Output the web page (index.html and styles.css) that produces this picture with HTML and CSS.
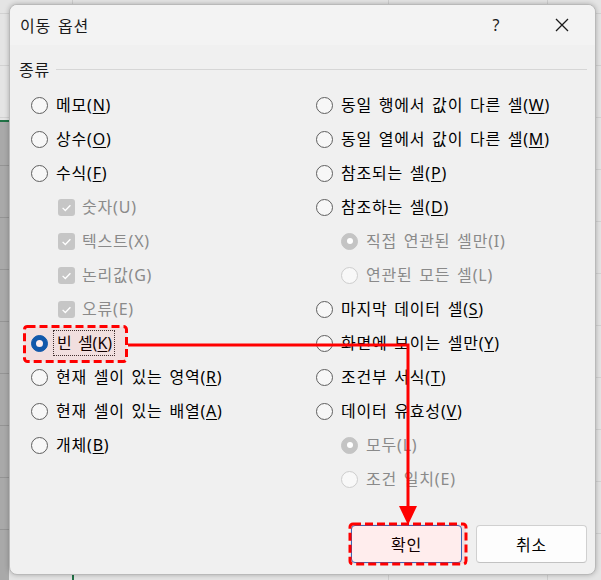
FILE: index.html
```html
<!DOCTYPE html>
<html lang="ko">
<head>
<meta charset="utf-8">
<title>이동 옵션</title>
<link rel="stylesheet" href="styles.css">
</head>
<body>
<div class="dialog">
  <div class="titlebar">
    <div class="title">이동 옵션</div>
    <div class="tb-btn help">?</div>
    <div class="tb-btn close">
      <svg width="14" height="14" viewBox="0 0 14 14"><path d="M1 1L13 13M13 1L1 13" stroke="#1a1a1a" stroke-width="1.3" fill="none"/></svg>
    </div>
  </div>
  <div class="content">
    <div class="group-head"><span class="group-label">종류</span><span class="group-line"></span></div>
    <div class="options">
      <div class="col">
        <div class="row"><span class="radio"></span><span class="lbl">메모(<u>N</u>)</span></div>
        <div class="row"><span class="radio"></span><span class="lbl">상수(<u>O</u>)</span></div>
        <div class="row"><span class="radio"></span><span class="lbl">수식(<u>F</u>)</span></div>
        <div class="row sub cbrow"><svg class="cb" width="17" height="17" viewBox="0 0 17 17"><rect x="0" y="0" width="17" height="17" rx="3" fill="#c6c6c6"/><path d="M4.6 8.9L7.3 11.5L12.4 6.2" stroke="#fff" stroke-width="1.3" fill="none"/></svg><span class="lbl dis">숫자(U)</span></div>
        <div class="row sub cbrow"><svg class="cb" width="17" height="17" viewBox="0 0 17 17"><rect x="0" y="0" width="17" height="17" rx="3" fill="#c6c6c6"/><path d="M4.6 8.9L7.3 11.5L12.4 6.2" stroke="#fff" stroke-width="1.3" fill="none"/></svg><span class="lbl dis">텍스트(X)</span></div>
        <div class="row sub cbrow"><svg class="cb" width="17" height="17" viewBox="0 0 17 17"><rect x="0" y="0" width="17" height="17" rx="3" fill="#c6c6c6"/><path d="M4.6 8.9L7.3 11.5L12.4 6.2" stroke="#fff" stroke-width="1.3" fill="none"/></svg><span class="lbl dis">논리값(G)</span></div>
        <div class="row sub cbrow"><svg class="cb" width="17" height="17" viewBox="0 0 17 17"><rect x="0" y="0" width="17" height="17" rx="3" fill="#c6c6c6"/><path d="M4.6 8.9L7.3 11.5L12.4 6.2" stroke="#fff" stroke-width="1.3" fill="none"/></svg><span class="lbl dis">오류(E)</span></div>
        <div class="row"><span class="radio on"></span><span class="lbl focus">빈 셀(<u>K</u>)</span></div>
        <div class="row"><span class="radio"></span><span class="lbl">현재 셀이 있는 영역(<u>R</u>)</span></div>
        <div class="row"><span class="radio"></span><span class="lbl">현재 셀이 있는 배열(<u>A</u>)</span></div>
        <div class="row"><span class="radio"></span><span class="lbl">개체(<u>B</u>)</span></div>
      </div>
      <div class="col">
        <div class="row"><span class="radio"></span><span class="lbl">동일 행에서 값이 다른 셀(<u>W</u>)</span></div>
        <div class="row"><span class="radio"></span><span class="lbl">동일 열에서 값이 다른 셀(<u>M</u>)</span></div>
        <div class="row"><span class="radio"></span><span class="lbl">참조되는 셀(<u>P</u>)</span></div>
        <div class="row"><span class="radio"></span><span class="lbl">참조하는 셀(<u>D</u>)</span></div>
        <div class="row sub"><span class="radio dis on"></span><span class="lbl dis">직접 연관된 셀만(I)</span></div>
        <div class="row sub"><span class="radio dis"></span><span class="lbl dis">연관된 모든 셀(L)</span></div>
        <div class="row"><span class="radio"></span><span class="lbl">마지막 데이터 셀(<u>S</u>)</span></div>
        <div class="row"><span class="radio"></span><span class="lbl">화면에 보이는 셀만(<u>Y</u>)</span></div>
        <div class="row"><span class="radio"></span><span class="lbl">조건부 서식(<u>T</u>)</span></div>
        <div class="row"><span class="radio"></span><span class="lbl">데이터 유효성(<u>V</u>)</span></div>
        <div class="row sub"><span class="radio dis on"></span><span class="lbl dis">모두(L)</span></div>
        <div class="row sub"><span class="radio dis"></span><span class="lbl dis">조건 일치(E)</span></div>
      </div>
    </div>
    <div class="footer">
      <div class="btn default">확인</div>
      <div class="btn">취소</div>
    </div>
  </div>
</div>
<svg class="annot" width="601" height="580" viewBox="0 0 601 580">
  <rect x="24.5" y="326.5" width="102" height="35" rx="3" fill="rgba(255,0,0,0.07)" stroke="#f00" stroke-width="3" stroke-dasharray="8 4"/>
  <rect x="350" y="524" width="116" height="40" rx="3" fill="rgba(255,0,0,0.07)" stroke="#f00" stroke-width="3" stroke-dasharray="8 4"/>
  <polyline points="128,345 408,345 408,508" fill="none" stroke="#f00" stroke-width="3"/>
  <polygon points="399,506 417,506 408,525" fill="#f00"/>
</svg>
</body>
</html>
```
FILE: styles.css
```css
html, body {
  margin: 0;
  padding: 0;
}
body {
  position: relative;
  width: 601px;
  height: 580px;
  overflow: hidden;
  font-family: "Noto Sans", "Noto Sans CJK KR", sans-serif;
  background:
    linear-gradient(#217346, #217346) 0 120px / 9px 2px no-repeat,
    linear-gradient(#217346, #217346) 72px 574px / 2px 6px no-repeat,
    repeating-linear-gradient(to bottom, transparent 0 11px, #949494 11px 12px, transparent 12px 52px) 0 154px / 9px 426px no-repeat,
    linear-gradient(#a9a9a9, #a9a9a9) 0 122px / 9px 458px no-repeat,
    linear-gradient(to right, transparent 72px, #cfcfcf 72px 73px, transparent 73px 388px, #cfcfcf 388px 389px, transparent 389px 547px, #cfcfcf 547px 548px, transparent 548px),
    repeating-linear-gradient(to bottom, transparent 0 13px, #d2d2d2 13px 14px, transparent 14px 52px),
    #e4e4e4;
}
.dialog {
  box-sizing: border-box;
  margin: 4px 0 0 9px;
  width: 587px;
  height: 571px;
  background: #f0f0f0;
  border: 1px solid #b9b9b9;
  border-radius: 8px;
  box-shadow: 0 0 5px rgba(0, 0, 0, 0.25);
  overflow: hidden;
  display: flex;
  flex-direction: column;
  color: #000;
}
.titlebar {
  height: 40px;
  flex: none;
  display: flex;
  align-items: center;
  background: #f3f3f3;
}
.title {
  flex: 1;
  padding-left: 10px;
  font-size: 16px;
  letter-spacing: 0.8px;
  word-spacing: 2px;
  color: #1a1a1a;
}
.tb-btn {
  width: 66px;
  height: 40px;
  display: flex;
  align-items: center;
  justify-content: center;
  font-size: 16px;
  color: #1a1a1a;
}
.content {
  flex: 1;
  padding: 12px 8px 0 9px;
  display: flex;
  flex-direction: column;
}
.group-head {
  height: 24px;
  display: flex;
  align-items: center;
  gap: 6px;
}
.group-label {
  font-size: 16px;
  letter-spacing: 0.8px;
  color: #1a1a1a;
}
.group-line {
  flex: 1;
  height: 1px;
  background: #d6d6d6;
}
.options {
  margin: 7px 0 0 12px;
  display: grid;
  grid-template-columns: 285px 1fr;
}
.row {
  height: 34px;
  display: flex;
  align-items: center;
  gap: 8px;
}
.row.sub {
  padding-left: 25px;
}
.row.cbrow {
  padding-left: 27px;
  gap: 7px;
}
.cb {
  flex: none;
}
.lbl {
  font-size: 16px;
  word-spacing: 1.8px;
  letter-spacing: 0.8px;
  white-space: nowrap;
  line-height: 20px;
}
.lbl u {
  text-decoration-thickness: 1px;
  text-underline-offset: 2px;
}
.lbl.dis {
  color: #8a8a8a;
}
.lbl.focus {
  padding: 2px 2px 2px 3px;
  margin: 0 0 0 -3px;
  border: 1px dotted #333;
  letter-spacing: 0;
  word-spacing: 2px;
}
.radio {
  flex: none;
  box-sizing: border-box;
  width: 17px;
  height: 17px;
  border-radius: 50%;
  border: 1px solid #5f5f5f;
  background: #f7f7f7;
  display: grid;
  place-items: center;
}
.radio.on {
  background: #005fb8;
  border-color: #005fb8;
}
.radio.on::after {
  content: "";
  width: 7px;
  height: 7px;
  border-radius: 50%;
  background: #fff;
}
.radio.dis {
  border-color: #cdcdcd;
  background: #f8f8f8;
}
.radio.dis.on {
  background: #c4c4c4;
  border-color: #c4c4c4;
}
.radio.dis.on::after {
  width: 6px;
  height: 6px;
}
.footer {
  margin-top: 29px;
  display: flex;
  justify-content: flex-end;
  gap: 14px;
}
.btn {
  box-sizing: border-box;
  width: 111px;
  height: 38px;
  border: 1px solid #d0d0d0;
  border-bottom-color: #c2c2c2;
  border-radius: 4px;
  background: #fdfdfd;
  display: flex;
  align-items: center;
  justify-content: center;
  font-size: 16px;
  letter-spacing: 0.8px;
}
.btn.default {
  border: 1px solid #2a6fc4;
  background: #fff;
}
.annot {
  position: absolute;
  left: 0;
  top: 0;
  pointer-events: none;
}
```
